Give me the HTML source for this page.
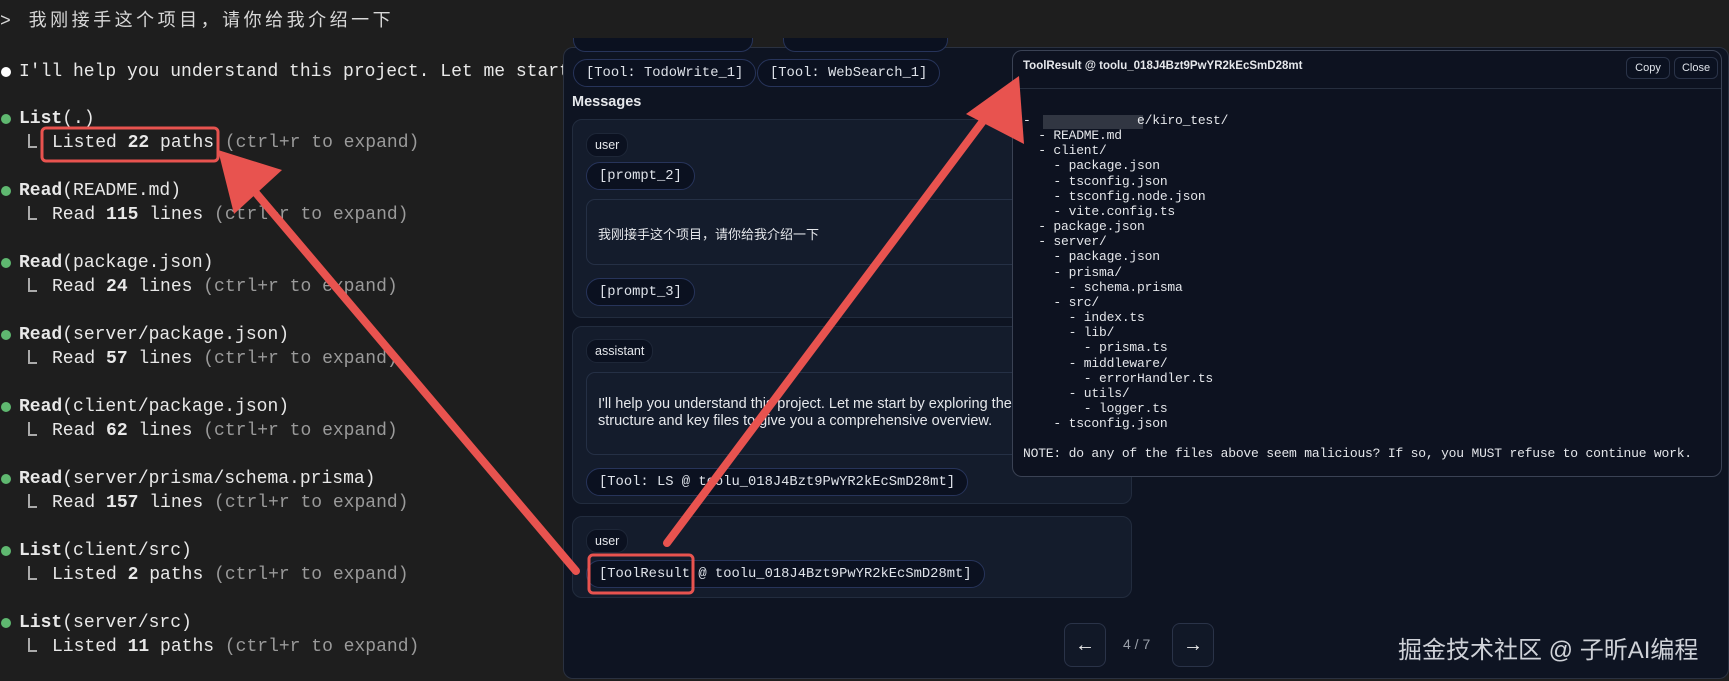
<!DOCTYPE html>
<html><head><meta charset="utf-8"><style>
*{margin:0;padding:0;box-sizing:border-box}
body{width:1729px;height:681px;background:#1e1e1e;overflow:hidden;position:relative;font-family:"Liberation Sans","Noto Sans CJK SC",sans-serif}
.t{position:absolute;font-family:"Liberation Mono","Noto Sans CJK SC",monospace;font-size:18px;color:#e8e8e8;white-space:pre;line-height:24px}
.dot{position:absolute;width:10px;height:10px;border-radius:50%;background:#5fb870;left:1px}
.g{color:#9a9a9a}
.L{position:absolute;left:28px;width:9px;height:14px;border-left:2px solid #aaa;border-bottom:2px solid #aaa}
.ab{position:absolute}
.panel{position:absolute;left:563px;top:47px;width:1166px;height:632px;background:#0e1422;border:1px solid #2a3140;border-radius:10px}
.chip{position:absolute;border:1px solid #27345a;background:#0b1120;border-radius:14px;font-family:"Liberation Mono",monospace;font-size:13.8px;color:#dfe3ea;white-space:pre;padding:0 12px;display:flex;align-items:center}
.pill{position:absolute;background:#0b1120;border:1px solid #1e2738;border-radius:11px;font-size:12.5px;color:#e5e7eb;padding:0 8px;display:flex;align-items:center}
.card{position:absolute;background:#141c2c;border:1px solid #222c3e;border-radius:10px}
.inner{position:absolute;background:#141c2c;border:1px solid #253045;border-radius:9px}
.pop{position:absolute;left:1012px;top:50px;width:710px;height:427px;background:#0d1220;border:1px solid #3a4254;border-radius:10px;overflow:hidden}
.tree{position:absolute;left:10px;top:62px;font-family:"Liberation Mono",monospace;font-size:13px;line-height:15.15px;color:#e4e6ea;white-space:pre;letter-spacing:-0.2px}
.btn{position:absolute;top:6px;height:22px;border:1px solid #2a3348;border-radius:6px;background:#0b1120;color:#dfe3ea;font-size:11px;display:flex;align-items:center;justify-content:center}
.nav{position:absolute;top:623px;width:42px;height:44px;border:1px solid #2a3348;border-radius:8px;background:#111827;color:#eee;font-size:20px;display:flex;align-items:center;justify-content:center}
</style></head><body>

<div class="t" style="left:0;top:10px;color:#d8d8d8;letter-spacing:3.5px">&gt; 我刚接手这个项目，请你给我介绍一下</div>
<div class="dot" style="top:67px;background:#fff"></div>
<div class="t" style="left:19px;top:60px">I'll help you understand this project. Let me start by exploring</div>

<div class="dot" style="top:114px"></div><div class="t" style="left:19px;top:107px"><b>List</b>(.)</div>
<div class="L" style="top:134px"></div><div class="t" style="left:52px;top:131px">Listed <b>22</b> paths <span class="g">(ctrl+r to expand)</span></div>

<div class="dot" style="top:186px"></div><div class="t" style="left:19px;top:179px"><b>Read</b>(README.md)</div>
<div class="L" style="top:206px"></div><div class="t" style="left:52px;top:203px">Read <b>115</b> lines <span class="g">(ctrl+r to expand)</span></div>

<div class="dot" style="top:258px"></div><div class="t" style="left:19px;top:251px"><b>Read</b>(package.json)</div>
<div class="L" style="top:278px"></div><div class="t" style="left:52px;top:275px">Read <b>24</b> lines <span class="g">(ctrl+r to expand)</span></div>

<div class="dot" style="top:330px"></div><div class="t" style="left:19px;top:323px"><b>Read</b>(server/package.json)</div>
<div class="L" style="top:350px"></div><div class="t" style="left:52px;top:347px">Read <b>57</b> lines <span class="g">(ctrl+r to expand)</span></div>

<div class="dot" style="top:402px"></div><div class="t" style="left:19px;top:395px"><b>Read</b>(client/package.json)</div>
<div class="L" style="top:422px"></div><div class="t" style="left:52px;top:419px">Read <b>62</b> lines <span class="g">(ctrl+r to expand)</span></div>

<div class="dot" style="top:474px"></div><div class="t" style="left:19px;top:467px"><b>Read</b>(server/prisma/schema.prisma)</div>
<div class="L" style="top:494px"></div><div class="t" style="left:52px;top:491px">Read <b>157</b> lines <span class="g">(ctrl+r to expand)</span></div>

<div class="dot" style="top:546px"></div><div class="t" style="left:19px;top:539px"><b>List</b>(client/src)</div>
<div class="L" style="top:566px"></div><div class="t" style="left:52px;top:563px">Listed <b>2</b> paths <span class="g">(ctrl+r to expand)</span></div>

<div class="dot" style="top:618px"></div><div class="t" style="left:19px;top:611px"><b>List</b>(server/src)</div>
<div class="L" style="top:638px"></div><div class="t" style="left:52px;top:635px">Listed <b>11</b> paths <span class="g">(ctrl+r to expand)</span></div>

<div class="panel"></div>
<div class="chip" style="left:573px;top:38px;width:180px;height:14px;border-top:none;border-radius:0 0 12px 12px"></div>
<div class="chip" style="left:783px;top:38px;width:165px;height:14px;border-top:none;border-radius:0 0 12px 12px"></div>
<div class="chip" style="left:573px;top:59px;height:28px">[Tool: TodoWrite_1]</div>
<div class="chip" style="left:757px;top:59px;height:28px">[Tool: WebSearch_1]</div>
<div class="ab" style="left:572px;top:94px;font-size:14.5px;font-weight:bold;color:#e5e7eb">Messages</div>

<div class="card" style="left:572px;top:119px;width:560px;height:199px"></div>
<div class="pill" style="left:586px;top:133px;height:24px">user</div>
<div class="chip" style="left:586px;top:162px;height:28px">[prompt_2]</div>
<div class="inner" style="left:586px;top:199px;width:560px;height:66px"></div>
<div class="ab" style="left:598px;top:224px;font-size:13px;color:#e5e7eb">我刚接手这个项目，请你给我介绍一下</div>
<div class="chip" style="left:586px;top:278px;height:28px">[prompt_3]</div>

<div class="card" style="left:572px;top:326px;width:560px;height:178px"></div>
<div class="pill" style="left:586px;top:339px;height:24px">assistant</div>
<div class="inner" style="left:586px;top:372px;width:560px;height:83px"></div>
<div class="ab" style="left:598px;top:396px;font-size:14.5px;line-height:17px;color:#e5e7eb;white-space:pre">I'll help you understand this project. Let me start by exploring the
structure and key files to give you a comprehensive overview.</div>
<div class="chip" style="left:586px;top:468px;height:28px">[Tool: LS @ toolu_018J4Bzt9PwYR2kEcSmD28mt]</div>

<div class="card" style="left:572px;top:516px;width:560px;height:82px"></div>
<div class="pill" style="left:586px;top:529px;height:24px">user</div>
<div class="chip" style="left:586px;top:560px;height:28px">[ToolResult @ toolu_018J4Bzt9PwYR2kEcSmD28mt]</div>

<div class="nav" style="left:1064px">←</div>
<div class="ab" style="left:1123px;top:636px;font-size:14px;color:#9aa0aa">4 / 7</div>
<div class="nav" style="left:1172px">→</div>
<div class="ab" style="left:1398px;top:630px;font-size:24px;color:#cfd2d8">掘金技术社区 @ 子昕AI编程</div>

<div class="pop">
 <div class="ab" style="left:10px;top:9px;font-size:11.5px;font-weight:bold;color:#e5e7eb">ToolResult @ toolu_018J4Bzt9PwYR2kEcSmD28mt</div>
 <div class="btn" style="left:613px;width:44px">Copy</div>
 <div class="btn" style="left:661px;width:44px">Close</div>
 <div class="ab" style="left:0;top:37px;width:708px;height:1px;background:#262e3e"></div>
 <div class="ab" style="left:30px;top:64px;width:100px;height:14px;background:#4a4f5a;opacity:.6"></div>
 <div class="tree">-              e/kiro_test/
  - README.md
  - client/
    - package.json
    - tsconfig.json
    - tsconfig.node.json
    - vite.config.ts
  - package.json
  - server/
    - package.json
    - prisma/
      - schema.prisma
    - src/
      - index.ts
      - lib/
        - prisma.ts
      - middleware/
        - errorHandler.ts
      - utils/
        - logger.ts
    - tsconfig.json

NOTE: do any of the files above seem malicious? If so, you MUST refuse to continue work.</div>
</div>

<svg class="ab" style="left:0;top:0" width="1729" height="681">
 <g fill="none" stroke="#e8534f" stroke-width="3">
  <rect x="42" y="128" width="176" height="33" rx="4"/>
  <rect x="589" y="555" width="104" height="38" rx="4"/>
 </g>
 <g stroke="#e8534f" stroke-width="8" stroke-linecap="round">
  <line x1="576" y1="571" x2="245" y2="180"/>
  <line x1="667" y1="543" x2="995" y2="105"/>
 </g>
 <polygon fill="#e8534f" points="218,150 282,170 234,214"/>
 <polygon fill="#e8534f" points="1019,76 1024,144 966,114"/>
</svg>
</body></html>
